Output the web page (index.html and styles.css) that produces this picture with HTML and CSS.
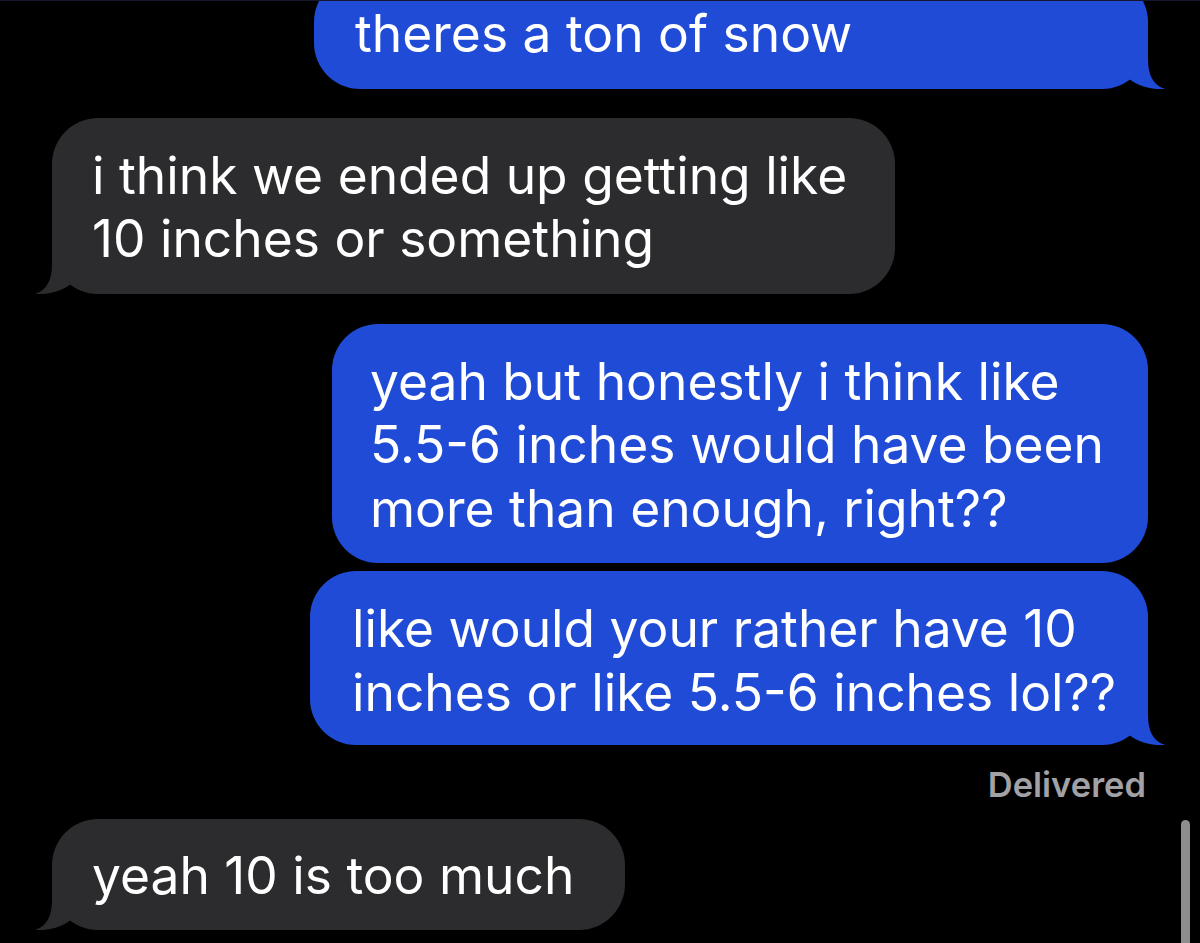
FILE: index.html
```html
<!DOCTYPE html>
<html>
<head>
<meta charset="utf-8">
<link rel="stylesheet" href="styles.css">
</head>
<body>
<div class="topline"></div>
<div class="thread">
  <div class="msg me b1"><span class="t">theres a ton of snow</span><svg class="tail" width="80" height="44" viewBox="0 0 80 44"><path d="M63 0 L63 14 C63 30 68 40 80 44 C66 45 52 41 43 33 C36 40 22 44 0 44 L0 0 Z"/></svg></div>
  <div class="msg them b2"><span class="t">i think we ended up getting like<br>10 inches or something</span><svg class="tail" width="80" height="44" viewBox="0 0 80 44"><path d="M63 0 L63 14 C63 30 68 40 80 44 C66 45 52 41 43 33 C36 40 22 44 0 44 L0 0 Z"/></svg></div>
  <div class="msg me b3"><span class="t">yeah but honestly i think like<br>5.5-6 inches would have been<br>more than enough, right??</span></div>
  <div class="msg me b4"><span class="t">like would your rather have 10<br>inches or like 5.5-6 inches lol??</span><svg class="tail" width="80" height="44" viewBox="0 0 80 44"><path d="M63 0 L63 14 C63 30 68 40 80 44 C66 45 52 41 43 33 C36 40 22 44 0 44 L0 0 Z"/></svg></div>
  <div class="status">Delivered</div>
  <div class="msg them b5"><span class="t">yeah 10 is too much</span><svg class="tail" width="80" height="44" viewBox="0 0 80 44"><path d="M63 0 L63 14 C63 30 68 40 80 44 C66 45 52 41 43 33 C36 40 22 44 0 44 L0 0 Z"/></svg></div>
</div>
<div class="scrollbar"></div>
</body>
</html>
```

FILE: styles.css
```css
html, body {
  margin: 0;
  padding: 0;
  background: #000;
  height: 943px;
  overflow: hidden;
}

body {
  position: relative;
  font-family: "Inter", "Liberation Sans", sans-serif;
}

.topline {
  height: 1px;
  background: #15162e;
  position: absolute;
  top: 0;
  left: 0;
  right: 0;
  z-index: 2;
}

.thread {
  display: flex;
  flex-direction: column;
  padding: 0 52px;
}

.msg {
  position: relative;
  box-sizing: border-box;
  padding: 26px 40px 23px;
  border-radius: 46px;
  font-size: 51.5px;
  line-height: 63.5px;
  color: #fff;
  white-space: nowrap;
}

.t {
  position: relative;
  z-index: 1;
}

.me {
  align-self: flex-end;
  background: #1f4bd7;
}

.them {
  align-self: flex-start;
  background: #2c2c2e;
}

.tail {
  position: absolute;
  bottom: 0;
  z-index: 0;
}

.me .tail {
  right: -17px;
  fill: #1f4bd7;
}

.them .tail {
  left: -17px;
  fill: #2c2c2e;
  transform: scaleX(-1);
}

.b1 {
  margin-top: -24px;
  width: 834px;
  padding-left: 41px;
}

.b2 {
  margin-top: 29px;
  width: 843px;
}

.b3 {
  margin-top: 30px;
  width: 816px;
  padding-left: 38px;
}

.b4 {
  margin-top: 8px;
  width: 838px;
  padding-left: 42px;
  padding-bottom: 21px;
}

.status {
  align-self: flex-end;
  margin-top: 20px;
  margin-right: 2px;
  font-weight: 600;
  font-size: 34.5px;
  line-height: 40px;
  color: #a1a1a6;
}

.b5 {
  margin-top: 14px;
  padding-top: 25px;
  padding-bottom: 22px;
  width: 573px;
}

.scrollbar {
  position: absolute;
  left: 1181px;
  top: 820px;
  width: 9px;
  height: 140px;
  border-radius: 5px;
  background: #8e8e8e;
}
```
